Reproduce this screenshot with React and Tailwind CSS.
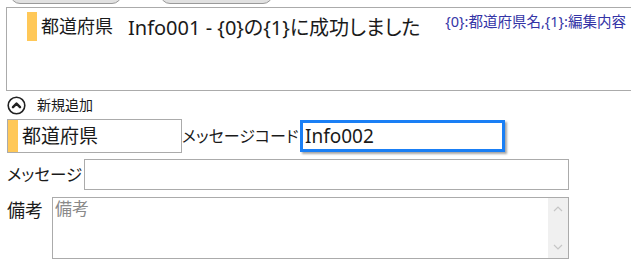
import React from 'react';

const font = "font-['Noto_Sans','Noto_Sans_CJK_JP',sans-serif]";

const App = () => {
  return (
    <div className={`w-[631px] h-[263px] bg-white overflow-hidden text-[#1a1a1a] ${font} [font-feature-settings:'palt']`}>
      {/* tab buttons cut off at the top */}
      <div className="h-[7px] overflow-hidden flex items-start pl-[10px] gap-[38px]">
        <div className="w-[112px] h-[20px] -mt-[16px] rounded-[10px] border border-[#9a9a9a] bg-[#e1e1e1]" />
        <div className="w-[113px] h-[20px] -mt-[16px] rounded-[10px] border border-[#9a9a9a] bg-[#e1e1e1]" />
      </div>

      {/* selected message box */}
      <div className="ml-[6px] h-[84px] border border-r-0 border-[#ababab] flex items-start pl-[20px] pt-[4px]">
        <div className="w-[10px] h-[29px] bg-[#ffc858] shrink-0" />
        <div className="ml-[4px] text-[18px] leading-[24px] mt-[2px] whitespace-nowrap">都道府県</div>
        <div className="ml-[15px] text-[20px] leading-[26px] mt-[3px] whitespace-nowrap">Info001 - {'{0}'}の{'{1}'}に成功しました</div>
        <div className="ml-auto mr-[5px] text-[14.5px] leading-[18px] text-[#3434a6] whitespace-nowrap">{'{0}'}:都道府県名,{'{1}'}:編集内容</div>
      </div>

      {/* 新規追加 */}
      <div className="h-[28px] flex items-center pl-[7px] gap-[11px]">
        <svg width="19" height="19" viewBox="0 0 19 19">
          <circle cx="9.5" cy="9.5" r="8.3" fill="none" stroke="#222" strokeWidth="1.6" />
          <path d="M6 11.2 L9.5 7.7 L13 11.2" fill="none" stroke="#222" strokeWidth="2.5" strokeLinecap="round" strokeLinejoin="round" />
        </svg>
        <span className="text-[14px] leading-[18px]">新規追加</span>
      </div>

      {/* 都道府県 / メッセージコード row */}
      <div className="flex items-center pl-[7px] h-[34px]">
        <div className="w-[175px] h-[34px] border border-[#ababab] flex items-center shrink-0">
          <div className="w-[10px] h-full bg-[#ffc858]" />
          <span className="ml-[4px] text-[19px] leading-[24px]">都道府県</span>
        </div>
        <span className="w-[118px] shrink-0 text-[16px] leading-[24px] whitespace-nowrap">メッセージコード</span>
        <div className="w-[205px] h-[32px] shrink-0 border-[3px] border-[#1a7ff5] shadow-[2px_2px_2px_rgba(0,0,0,0.35)] flex items-center pl-[2px]">
          <span className="text-[19px] leading-[24px]">Info002</span>
        </div>
      </div>

      {/* メッセージ row */}
      <div className="flex items-center pl-[7px] mt-[6px] h-[31px]">
        <span className="w-[77px] shrink-0 text-[16.5px] leading-[24px] whitespace-nowrap">メッセージ</span>
        <div className="w-[485px] h-[31px] shrink-0 border border-[#ababab]" />
      </div>

      {/* 備考 row */}
      <div className="flex items-start pl-[7px] mt-[7px]">
        <span className="w-[45px] shrink-0 text-[18px] leading-[24px] mt-[1px] whitespace-nowrap">備考</span>
        <div className="w-[517px] h-[62px] shrink-0 border border-[#ababab] flex">
          <span className="flex-1 pl-[2px] text-[17px] leading-[22px] text-[#8a8a8a]">備考</span>
          <div className="w-[20px] bg-[#f0f0f0] flex flex-col justify-between items-center py-[8px]">
            <svg width="10" height="6" viewBox="0 0 10 6">
              <path d="M1 5 L5 1 L9 5" fill="none" stroke="#c6c6c6" strokeWidth="1.2" />
            </svg>
            <svg width="10" height="6" viewBox="0 0 10 6">
              <path d="M1 1 L5 5 L9 1" fill="none" stroke="#c6c6c6" strokeWidth="1.2" />
            </svg>
          </div>
        </div>
      </div>
    </div>
  );
};

export default App;
